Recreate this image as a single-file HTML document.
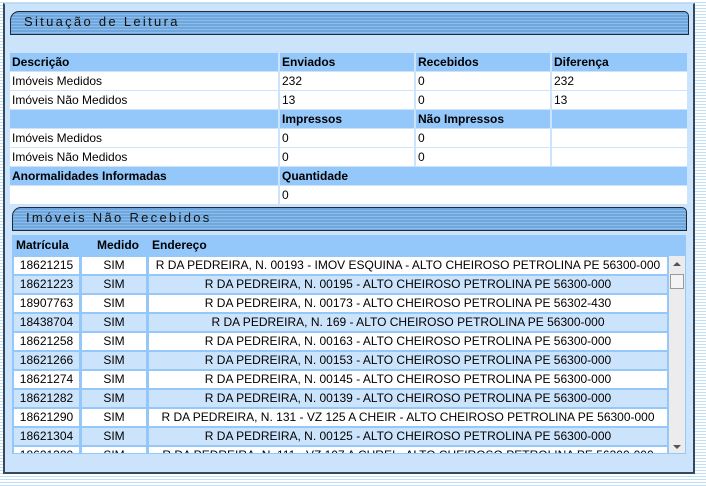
<!DOCTYPE html>
<html><head><meta charset="utf-8"><style>
body{margin:0;width:706px;height:486px;overflow:hidden;font-family:"Liberation Sans",Arial,sans-serif;font-size:12px;color:#000;
background:repeating-linear-gradient(#fff 0,#fff 2px,#bfe0f7 2px,#bfe0f7 3px);position:relative}
.panel{position:absolute;left:3px;top:3px;width:692px;height:471px;background:#cce4fb;border:1px solid #c0d8ee;border-right:2px solid #34495e;border-bottom:2px solid #34495e;border-left:2px solid #34495e;box-sizing:border-box}
.tb{position:absolute;height:24px;border:1px solid #1d2b3a;border-radius:9px 5px 0 0;box-sizing:border-box;
background:repeating-linear-gradient(#6fa6dc 0,#6fa6dc 2px,#8dbdec 2px,#8dbdec 3px);font-size:13px;letter-spacing:2.3px;line-height:20px;padding-left:13px;color:#111}
.c{position:absolute;height:18px;line-height:18px;padding-left:2px;box-sizing:border-box;white-space:nowrap;overflow:hidden}
.h{background:#94c8fb;font-weight:bold}
.w{background:#fff}
.l{background:#cce4fb}
.ct{text-align:center;padding:0}
</style></head><body>
<div class="panel"></div>
<div class="tb" style="left:10px;top:11px;width:679px">Situação de Leitura</div>
<div id="t1"></div>
<div class="tb" style="left:12px;top:207px;width:675px">Imóveis Não Recebidos</div>
<div style="position:absolute;left:12px;top:235px;width:674px;height:219px;background:#94c8fb"></div>
<div id="t2"></div>
<div style="position:absolute;left:669px;top:256px;width:16px;height:197px;background:#ececec"></div>
<div style="position:absolute;left:670px;top:274px;width:14px;height:15px;background:#f4f4f4;border:1px solid #999;box-sizing:border-box"></div>
<div style="position:absolute;left:673px;top:262px;width:0;height:0;border:4px solid transparent;border-bottom:4px solid #555;border-top:0"></div>
<div style="position:absolute;left:673px;top:445px;width:0;height:0;border:4px solid transparent;border-top:4px solid #555;border-bottom:0"></div>
<script>
var cols=[[10,268],[280,134],[416,134],[552,135]];
var rows=[
["h","Descrição","Enviados","Recebidos","Diferença"],
["w","Imóveis Medidos","232","0","232"],
["w","Imóveis Não Medidos","13","0","13"],
["h","","Impressos","Não Impressos",""],
["w","Imóveis Medidos","0","0",""],
["w","Imóveis Não Medidos","0","0",""]];
var s="";
rows.forEach(function(r,i){var y=53+i*19;for(var j=0;j<4;j++){var cls=r[0];s+='<div class="c '+cls+'" style="left:'+cols[j][0]+'px;top:'+y+'px;width:'+cols[j][1]+'px">'+r[j+1]+'</div>';}});
s+='<div class="c h" style="left:10px;top:167px;width:268px">Anormalidades Informadas</div><div class="c h" style="left:280px;top:167px;width:407px">Quantidade</div>';
s+='<div class="c w" style="left:10px;top:186px;width:268px"></div><div class="c w" style="left:280px;top:186px;width:407px">0</div>';
document.getElementById("t1").innerHTML=s;
var d=[["18621215","R DA PEDREIRA, N. 00193 - IMOV ESQUINA - ALTO CHEIROSO PETROLINA PE 56300-000"],
["18621223","R DA PEDREIRA, N. 00195 - ALTO CHEIROSO PETROLINA PE 56300-000"],
["18907763","R DA PEDREIRA, N. 00173 - ALTO CHEIROSO PETROLINA PE 56302-430"],
["18438704","R DA PEDREIRA, N. 169 - ALTO CHEIROSO PETROLINA PE 56300-000"],
["18621258","R DA PEDREIRA, N. 00163 - ALTO CHEIROSO PETROLINA PE 56300-000"],
["18621266","R DA PEDREIRA, N. 00153 - ALTO CHEIROSO PETROLINA PE 56300-000"],
["18621274","R DA PEDREIRA, N. 00145 - ALTO CHEIROSO PETROLINA PE 56300-000"],
["18621282","R DA PEDREIRA, N. 00139 - ALTO CHEIROSO PETROLINA PE 56300-000"],
["18621290","R DA PEDREIRA, N. 131 - VZ 125 A CHEIR - ALTO CHEIROSO PETROLINA PE 56300-000"],
["18621304","R DA PEDREIRA, N. 00125 - ALTO CHEIROSO PETROLINA PE 56300-000"],
["18621320","R DA PEDREIRA, N. 111 - VZ 107 A CHREI - ALTO CHEIROSO PETROLINA PE 56300-000"]];
var t='<div class="c h" style="left:14px;top:236px;width:74px;font-size:12px">Matrícula</div><div class="c h ct" style="left:90px;top:236px;width:56px">Medido</div><div class="c h" style="left:150px;top:236px;width:530px">Endereço</div>';
t+='<div style="position:absolute;left:12px;top:256px;width:657px;height:197px;overflow:hidden">';
d.forEach(function(r,i){var y=1+i*19;var c=i%2?"l":"w";
t+='<div class="c '+c+' ct" style="left:2px;top:'+y+'px;width:65px;height:17px;line-height:17px">'+r[0]+'</div>';
t+='<div class="c '+c+' ct" style="left:70px;top:'+y+'px;width:64px;height:17px;line-height:17px">SIM</div>';
t+='<div class="c '+c+' ct" style="left:137px;top:'+y+'px;width:518px;height:17px;line-height:17px">'+r[1]+'</div>';});
t+='</div>';
document.getElementById("t2").innerHTML=t;
</script>
</body></html>
